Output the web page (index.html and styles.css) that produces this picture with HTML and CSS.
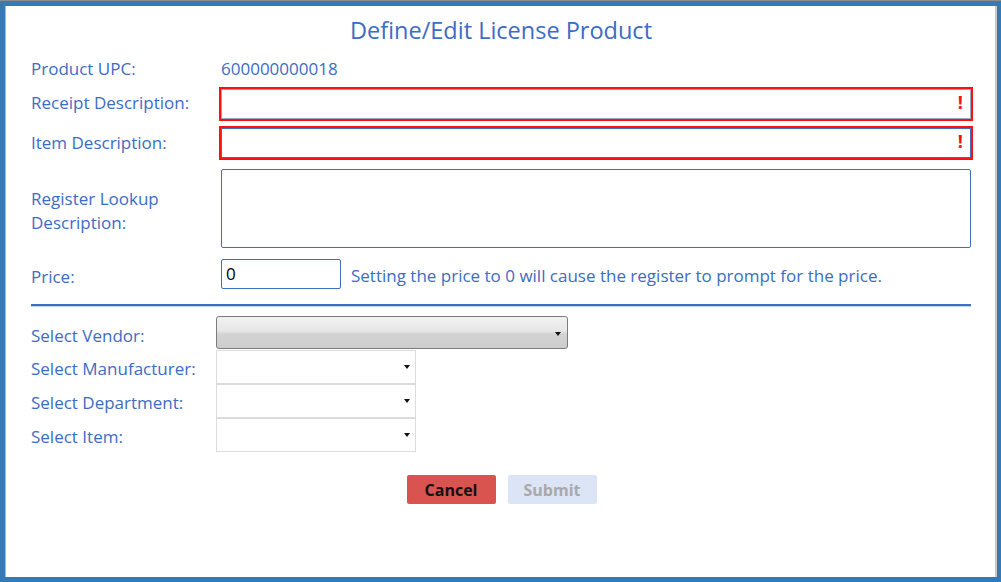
FILE: index.html
```html
<!DOCTYPE html>
<html>
<head>
<meta charset="utf-8">
<link rel="stylesheet" href="styles.css">
</head>
<body>
<div class="frame">
  <div class="panel">
    <h1 class="title">Define/Edit License Product</h1>
    <div class="form">
      <div class="row row-upc">
        <div class="label">Product UPC:</div>
        <div class="value">600000000018</div>
      </div>
      <div class="row row-receipt">
        <div class="label">Receipt Description:</div>
        <div class="field invalid"><span class="bang">!</span></div>
      </div>
      <div class="row row-item">
        <div class="label">Item Description:</div>
        <div class="field invalid focused"><span class="bang">!</span></div>
      </div>
      <div class="row row-lookup">
        <div class="label low">Register Lookup<br>Description:</div>
        <div class="area"></div>
      </div>
      <div class="row row-price">
        <div class="label lower">Price:</div>
        <div class="price-wrap">
          <div class="price-input">0</div>
          <span class="hint">Setting the price to 0 will cause the register to prompt for the price.</span>
        </div>
      </div>
      <div class="divider"></div>
      <div class="selects">
        <div class="srow srow-vendor">
          <div class="label lower">Select Vendor:</div>
          <div class="select vendor"></div>
        </div>
        <div class="srow">
          <div class="label low">Select Manufacturer:</div>
          <div class="select plain"></div>
        </div>
        <div class="srow">
          <div class="label low">Select Department:</div>
          <div class="select plain"></div>
        </div>
        <div class="srow">
          <div class="label low">Select Item:</div>
          <div class="select plain"></div>
        </div>
      </div>
      <div class="buttons">
        <button class="btn cancel">Cancel</button>
        <button class="btn submit">Submit</button>
      </div>
    </div>
  </div>
</div>
</body>
</html>
```

FILE: styles.css
```css
html, body {
  margin: 0;
  padding: 0;
  background: #ffffff;
}
body {
  font-family: "Open Sans", "Noto Sans", sans-serif;
  color: #3c6cc4;
}
.frame {
  width: 1001px;
  height: 582px;
  box-sizing: border-box;
  border-top: 1px solid #8c8c8c;
}
.panel {
  height: 581px;
  box-sizing: border-box;
  border-top: 5px solid #337ab7;
  border-left: 5px solid #337ab7;
  border-right: 4px solid #337ab7;
  border-bottom: 5px solid #337ab7;
  background: #fff;
  box-shadow: inset 1px 0 0 #9fbbd8, inset -2px 0 0 #c9c9c9;
}
.title {
  margin: 0;
  padding-top: 11px;
  font-size: 23.5px;
  line-height: 26px;
  font-weight: normal;
  text-align: center;
  color: #3c6cc4;
}
.form {
  padding: 0 25px 0 26px;
  font-size: 17px;
}
.row {
  display: grid;
  grid-template-columns: 190px 750px;
  align-items: center;
}
.label {
  line-height: 24px;
  white-space: nowrap;
}
.label.low {
  padding-top: 4px;
}
.label.lower {
  padding-top: 6px;
}
.row-upc {
  margin-top: 13px;
  height: 26px;
}
.value {
  line-height: 26px;
}
.row-receipt {
  margin-top: 7px;
}
.row-receipt .label {
  padding-bottom: 2px;
}
.row-item {
  margin-top: 9px;
}
.row-lookup {
  margin-top: 11px;
}
.row-price {
  margin-top: 11px;
  height: 30px;
}
.field {
  position: relative;
  height: 30px;
  box-sizing: border-box;
  border: 1px solid #95a9c9;
  background: #fff;
}
.field.focused {
  border-color: #3d6fc2;
}
.field.invalid {
  box-shadow: 0 0 0 2px #ff1010;
}
.bang {
  position: absolute;
  right: 7px;
  top: 0;
  line-height: 24px;
  font-size: 18px;
  font-weight: bold;
  color: #ff1010;
}
.area {
  height: 79px;
  box-sizing: border-box;
  border: 1px solid #3d6fc2;
  border-radius: 2px;
}
.price-wrap {
  display: flex;
  align-items: center;
  gap: 10px;
  height: 30px;
}
.price-input {
  width: 120px;
  height: 30px;
  box-sizing: border-box;
  border: 1px solid #3d6fc2;
  border-radius: 2px;
  padding-left: 4px;
  line-height: 28px;
  color: #000;
  font-size: 17px;
}
.hint {
  line-height: 26px;
  padding-top: 4px;
}
.divider {
  margin-top: 15px;
  height: 2px;
  background: #3d6fc2;
  box-shadow: 0 1px 0 #c5d4ec;
  width: 940px;
}
.selects {
  margin-top: 10px;
}
.srow {
  display: grid;
  grid-template-columns: 185px 200px;
  align-items: center;
  height: 34px;
}
.srow-vendor {
  grid-template-columns: 185px 352px;
  height: 33px;
  margin-bottom: 1px;
}
.select {
  position: relative;
  box-sizing: border-box;
}
.select::after {
  content: "";
  position: absolute;
  right: 5px;
  top: 50%;
  margin-top: -1px;
  border-left: 3px solid transparent;
  border-right: 3px solid transparent;
  border-top: 4px solid #111;
}
.vendor {
  height: 33px;
  border: 1px solid #7b7b7b;
  border-radius: 3px;
  background: linear-gradient(#f2f2f2 0%, #e6e6e6 45%, #d3d3d3 55%, #cdcdcd 100%);
}
.vendor::after {
  right: 6px;
}
.plain {
  height: 34px;
  border: 1px solid #dcdcdc;
  background: #fff;
}
.plain::after {
  right: 5px;
  margin-top: -2px;
}
.buttons {
  display: flex;
  justify-content: center;
  gap: 12px;
  margin-top: 23px;
}
.btn {
  width: 89px;
  height: 29px;
  border: none;
  border-radius: 2px;
  font-family: "Open Sans", "Noto Sans", sans-serif;
  font-size: 16px;
  font-weight: bold;
  padding: 0;
}
.cancel {
  background: #d9534f;
  color: #111;
}
.submit {
  background: #dbe5f5;
  color: #a9a9a9;
}
```
